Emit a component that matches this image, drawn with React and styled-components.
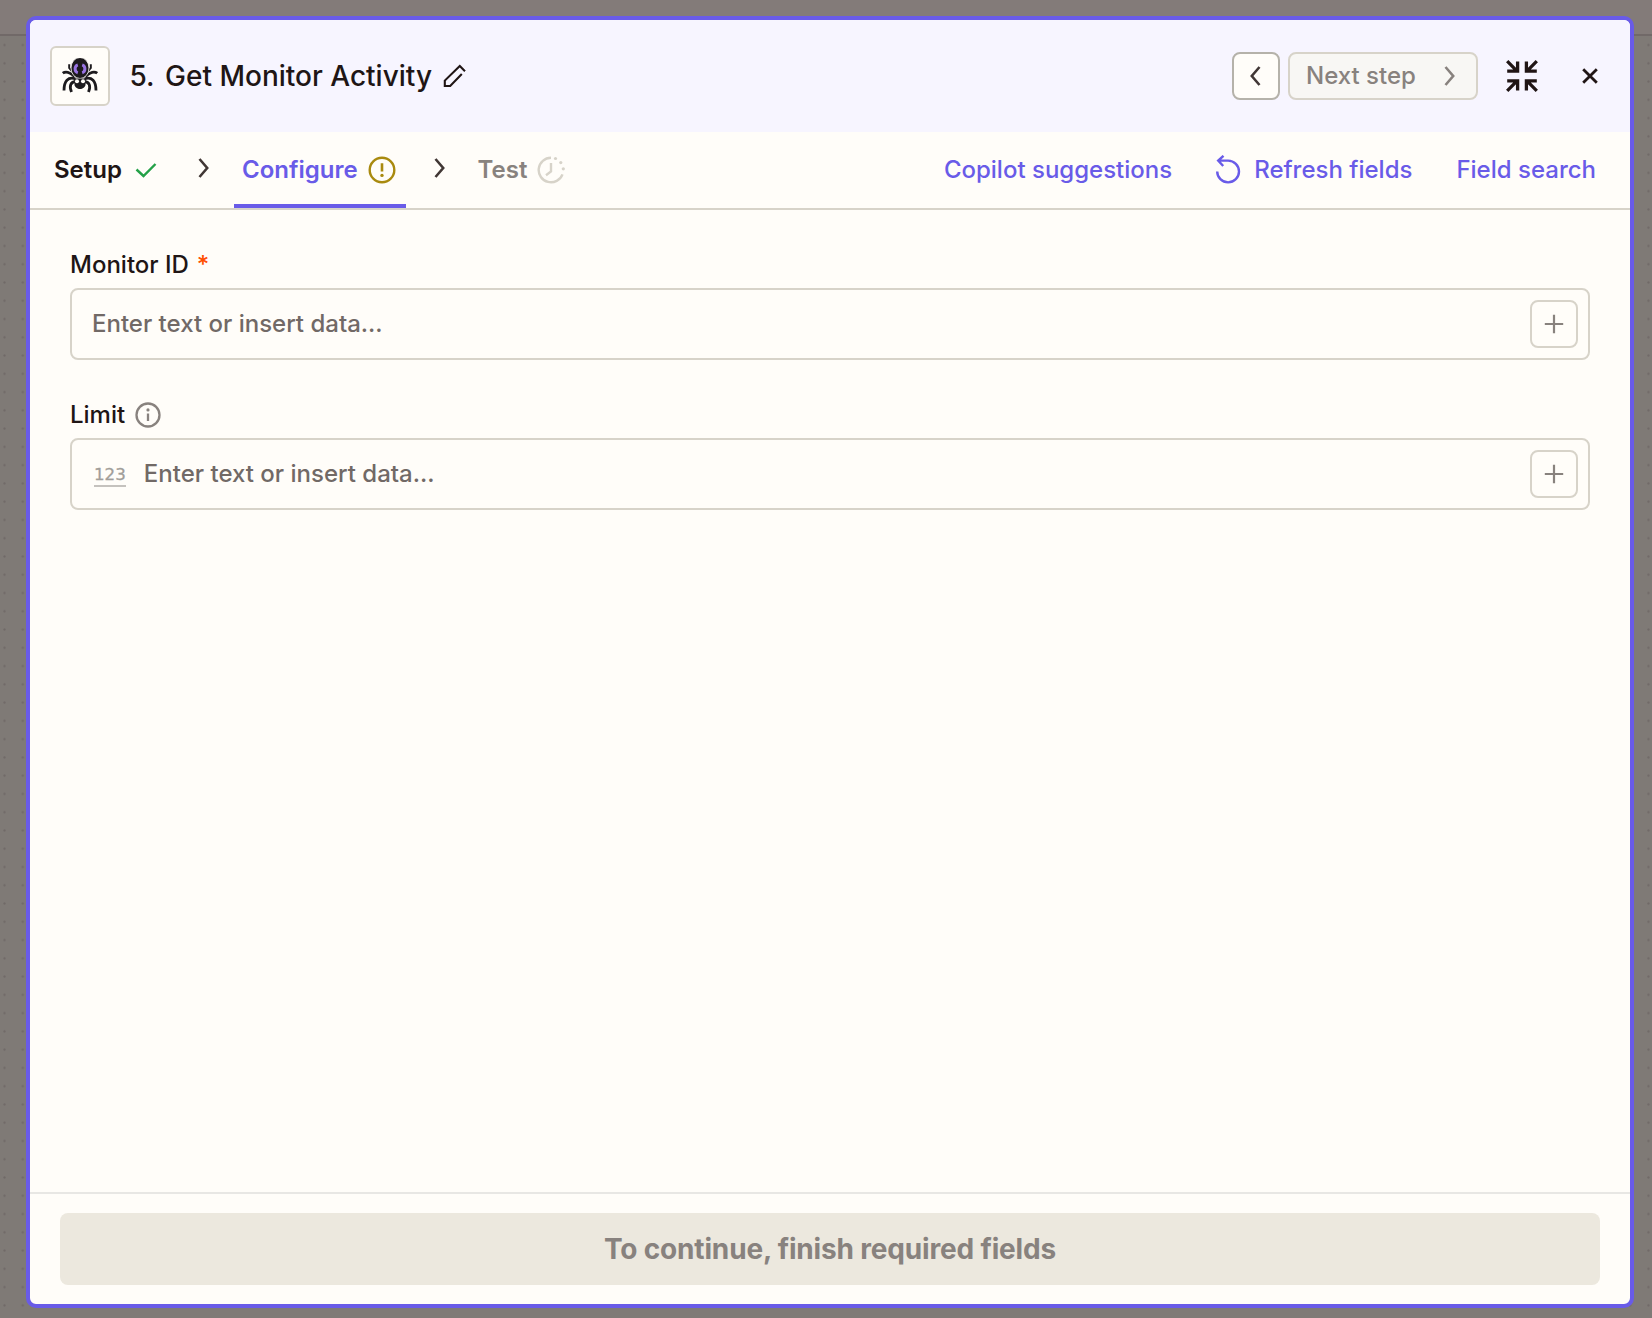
import { useState } from 'react'
import styled, { createGlobalStyle, css } from 'styled-components'

const GlobalStyle = createGlobalStyle`
  * {
    box-sizing: border-box;
  }
  body {
    margin: 0;
    font-family: Inter, "Liberation Sans", sans-serif;
    color: #201515;
  }
  button {
    font-family: inherit;
    cursor: pointer;
  }
  svg {
    display: block;
    flex-shrink: 0;
  }
`;

const Page = styled.div`
  height: 100vh;
  min-height: 1318px;
  padding: 16px 18px 10px 26px;
  overflow: hidden;
  background:
    linear-gradient(#837b79 0 34px, #716968 34px 36px, transparent 36px),
    radial-gradient(circle at 50% 50%, #706967 0 0.7px, transparent 1.5px) -4.6px 35.9px / 18.28px 18.28px,
    #7f7a76;
`;

const Panel = styled.section`
  display: flex;
  flex-direction: column;
  height: 1292px;
  border: 4px solid #695be8;
  border-radius: 10px;
  background: #fffdf9;
  overflow: hidden;
`;

const Header = styled.header`
  display: flex;
  align-items: center;
  height: 112px;
  padding: 0 32px 0 20px;
  background: #f7f5ff;
`;

const AppIcon = styled.div`
  display: flex;
  align-items: center;
  justify-content: center;
  width: 60px;
  height: 60px;
  border: 2px solid #d7d3c9;
  border-radius: 6px;
  background: #fffdf9;
`;

const Title = styled.h1`
  display: flex;
  align-items: center;
  gap: 10.5px;
  margin: 0 auto 0 19.5px;
  font-size: 28px;
  font-weight: 500;
  line-height: 36px;
  white-space: nowrap;
`;

// lifts a caption slightly against the icon beside it
const Caption = styled.span`
  margin-top: -2px;
`;

const StepButton = styled.button`
  display: flex;
  align-items: center;
  justify-content: center;
  height: 48px;
  width: 48px;
  padding: 0;
  border: 2px solid #b5b2aa;
  border-radius: 8px;
  background: #fffdf9;
  color: #413735;
  ${(props) => props.$wide && css`
    justify-content: space-between;
    width: 190px;
    margin-left: 8px;
    padding: 0 20px 0 16px;
    border-color: #d7d3c9;
    background: #f8f7f4;
    color: #88827e;
    font-size: 24px;
    font-weight: 500;
  `}
`;

const BackButton = styled(StepButton)`
  padding-right: 3px;
`;

const PlainButton = styled.button`
  display: flex;
  padding: 0;
  margin-left: ${(props) => props.$gap}px;
  border: none;
  background: none;
  color: #201515;
`;

const Toolbar = styled.nav`
  display: flex;
  align-items: stretch;
  height: 78px;
  padding: 0 34px 0 16px;
  border-bottom: 2px solid #d7d3c9;
`;

const Tab = styled.button`
  display: flex;
  align-items: center;
  gap: ${(props) => props.$gap || 10}px;
  padding: 4px 10px 0 8px;
  border: none;
  border-bottom: 4px solid ${(props) => (props.$active ? '#695be8' : 'transparent')};
  background: none;
  color: ${(props) => (props.$active ? '#695be8' : props.$muted ? '#88827e' : '#201515')};
  font-size: 24px;
  font-weight: 600;
`;

const Separator = styled.span`
  display: flex;
  align-items: center;
  padding-bottom: 4px;
  color: #413735;
  margin: 0 ${(props) => props.$right}px 0 ${(props) => props.$left}px;
`;

const Links = styled.div`
  display: flex;
  align-items: center;
  gap: 44px;
  margin-left: auto;
`;

const LinkButton = styled.button`
  display: flex;
  align-items: center;
  gap: 13px;
  height: 32px;
  padding: 0;
  border: none;
  background: none;
  color: #695be8;
  font-size: 24px;
  font-weight: 500;
  white-space: nowrap;
`;

const Fields = styled.main`
  flex: 1;
  display: flex;
  flex-direction: column;
  gap: 36px;
  padding: 36px 40px;
`;

const Field = styled.div`
  display: flex;
  flex-direction: column;
  gap: 6px;
`;

const Label = styled.label`
  display: flex;
  align-items: center;
  gap: 10px;
  height: 36px;
  font-size: 24px;
  font-weight: 500;
  svg {
    margin-top: 1px;
  }
`;

const Required = styled.span`
  margin-left: -2px;
  color: #ff4f00;
`;

const InputBox = styled.div`
  display: flex;
  align-items: center;
  height: 72px;
  padding: 0 10px 0 20px;
  border: 2px solid #d7d3c9;
  border-radius: 8px;
  background: #fffdf9;
`;

const NumberHint = styled.span`
  margin: 1px 18px 0 2px;
  border-bottom: 2px solid #c5c2be;
  color: #a19d99;
  font-family: "DejaVu Sans", sans-serif;
  font-size: 16.7px;
  line-height: 22px;
  -webkit-text-stroke: 0.3px #a19d99;
`;

const TextInput = styled.input`
  flex: 1;
  min-width: 0;
  padding: 0 0 2px;
  border: none;
  outline: none;
  background: none;
  color: #201515;
  font-family: inherit;
  font-size: 24px;
  font-weight: 500;
  &::placeholder {
    color: #716966;
    opacity: 1;
  }
`;

const InsertButton = styled(StepButton)`
  border-color: #d7d3c9;
  color: #88827e;
`;

const Footer = styled.footer`
  padding: 19px 30px;
  border-top: 2px solid #e8e7e4;
`;

const ContinueButton = styled.button`
  width: 100%;
  height: 72px;
  padding: 0;
  border: none;
  border-radius: 8px;
  background: #ece8de;
  color: #88827e;
  font-size: 28px;
  font-weight: 700;
  letter-spacing: -0.17px;
`;

const Chevron = ({ left }) => (
  <svg width="12" height="20" viewBox="0 0 12 20" fill="none" stroke="currentColor" strokeWidth="2.6">
    <path d={left ? 'M10.5 1 2.8 10l7.7 9' : 'M1.5 1l7.7 9-7.7 9'} />
  </svg>
);

const Spider = () => (
  <svg width="36" height="36" viewBox="0 0 36 36" fill="none">
    <g stroke="#1d1b1e" strokeWidth="2.8">
      <path d="M7.2 6.2v3.600l3.300 4M28.800 6.200v3.600l-3.300 4" strokeWidth="2" />
      <path d="M.8 15.200C4 12.800 7.500 14 12.500 18.500M35.200 15.200c-3.200-2.400-6.700-1.200-11.700 3.300" />
      <path d="M13.500 20.800C6 18.500 2 23 2 32.500M22.500 20.800C30 18.500 34 23 34 32.500" />
      <path d="M13.500 23.500c-5 .5-6.500 4.500-4 10.500M22.500 23.500c5 .5 6.500 4.500 4 10.500" />
    </g>
    <ellipse cx="18" cy="10" rx="9" ry="10.500" fill="#1d1b1e" stroke="#fffdf9" strokeWidth=".8" />
    <path d="M12.500 20.500h11v6c0 2.500-3 4.500-5.500 4.500s-5.500-2-5.500-4.500z" fill="#1d1b1e" />
    <circle cx="15" cy="23.200" r="2" fill="#fffdf9" />
    <circle cx="21" cy="23.200" r="2" fill="#fffdf9" />
    <path d="M15.800 6.800c-3.600 1.200-3.600 6.800 0 8M20.200 6.800c3.600 1.200 3.600 6.800 0 8" stroke="#9873e2" strokeWidth="3" />
  </svg>
);

const Pencil = () => (
  <svg width="24" height="24" viewBox="0 0 24 24" fill="none" stroke="currentColor" strokeWidth="2.1">
    <path d="M22 7.200 16.800 2 1.800 16.600V22h5.400L18.800 10" />
  </svg>
);

const Collapse = () => (
  <svg width="32" height="32" viewBox="0 0 32 32" fill="none" stroke="currentColor" strokeWidth="3.300">
    <path d="M1.200 1.200 10.800 10.800M1.200 11.200h10.400V1.500M30.800 1.200 21.200 10.800M30.800 11.200H20.400V1.500M1.200 30.800 10.800 21.200M1.200 20.800h10.400V30.500M30.800 30.800 21.200 21.200M30.800 20.800H20.400V30.500" />
  </svg>
);

const Close = () => (
  <svg width="16" height="16" viewBox="0 0 16 16" stroke="currentColor" strokeWidth="2.8">
    <path d="M1.200 1.200l13.600 13.600M14.800 1.200 1.200 14.800" />
  </svg>
);

const Check = () => (
  <svg width="22" height="16" viewBox="0 0 22 16" fill="none" stroke="#24a148" strokeWidth="2.400">
    <path d="M1.500 7.500l7 6.500L20.500 2" />
  </svg>
);

const Warning = () => (
  <svg width="28" height="28" viewBox="0 0 28 28" fill="none" stroke="#a98a0f" strokeWidth="2.400">
    <circle cx="14" cy="14" r="12.300" />
    <path d="M14 7.200v8.300" strokeWidth="2.600" />
    <circle cx="14" cy="19.400" r="1.700" fill="#a98a0f" stroke="none" />
  </svg>
);

const Pending = () => (
  <svg width="28" height="28" viewBox="0 0 28 28" fill="none" stroke="#d7d3c9" strokeWidth="2.400">
    <path d="M14 1.700a12.300 12.300 0 1 0 11.500 16.600" />
    <path d="M14 7v8.500l-5 3.700" />
    <g fill="#d7d3c9" stroke="none">
      <circle cx="18.500" cy="2.500" r="1.600" />
      <circle cx="23.800" cy="6.600" r="1.600" />
      <circle cx="26.300" cy="12.800" r="1.600" />
    </g>
  </svg>
);

const Refresh = () => (
  <svg width="25" height="30" viewBox="1 0 25 30" fill="none" stroke="currentColor" strokeWidth="2.400">
    <path d="M2.200 16.500a10.900 10.900 0 1 0 10.900-10.900H3.500M8.500.8 3.200 5.600l5 5.400" />
  </svg>
);

const Info = () => (
  <svg width="26" height="26" viewBox="0 0 26 26" fill="none" stroke="#88827e" strokeWidth="2.300">
    <circle cx="13" cy="13" r="11.500" />
    <path d="M13 11.500V19" />
    <circle cx="13" cy="7.900" r="1.600" fill="#88827e" stroke="none" />
  </svg>
);

const Plus = () => (
  <svg width="20" height="20" viewBox="0 0 20 20" stroke="currentColor" strokeWidth="2.200">
    <path d="M10 .8v18.400M.8 10h18.400" />
  </svg>
);

const DataInput = ({ id, numeric }) => {
  const [value, setValue] = useState('')

  return (
    <InputBox>
      {numeric && <NumberHint>123</NumberHint>}
      <TextInput
        id={id}
        value={value}
        placeholder="Enter text or insert data..."
        onChange={(e) => setValue(e.target.value)}
      />
      <InsertButton><Plus /></InsertButton>
    </InputBox>
  );
};

const App = () => {
  const [tab, setTab] = useState('configure')

  return (
    <>
      <GlobalStyle />
      <Page>
        <Panel>
          <Header>
            <AppIcon><Spider /></AppIcon>
            <Title>
              <span>5.</span>
              <span>Get Monitor Activity</span>
              <Pencil />
            </Title>
            <BackButton><Chevron left /></BackButton>
            <StepButton $wide disabled>
              <Caption>Next step</Caption>
              <Chevron />
            </StepButton>
            <PlainButton $gap={28}><Collapse /></PlainButton>
            <PlainButton $gap={44}><Close /></PlainButton>
          </Header>

          <Toolbar>
            <Tab $gap={13} $active={tab === 'setup'} onClick={() => setTab('setup')}>
              <Caption>Setup</Caption> <Check />
            </Tab>
            <Separator $left={31} $right={24}><Chevron /></Separator>
            <Tab $active={tab === 'configure'} onClick={() => setTab('configure')}>
              <Caption>Configure</Caption> <Warning />
            </Tab>
            <Separator $left={28} $right={24}><Chevron /></Separator>
            <Tab $muted>
              <Caption>Test</Caption> <Pending />
            </Tab>
            <Links>
              <LinkButton><Caption>Copilot suggestions</Caption></LinkButton>
              <LinkButton><Refresh /> <Caption>Refresh fields</Caption></LinkButton>
              <LinkButton><Caption>Field search</Caption></LinkButton>
            </Links>
          </Toolbar>

          <Fields>
            <Field>
              <Label htmlFor="monitor">
                Monitor ID <Required>*</Required>
              </Label>
              <DataInput id="monitor" />
            </Field>
            <Field>
              <Label htmlFor="limit">
                Limit <Info />
              </Label>
              <DataInput id="limit" numeric />
            </Field>
          </Fields>

          <Footer>
            <ContinueButton disabled>To continue, finish required fields</ContinueButton>
          </Footer>
        </Panel>
      </Page>
    </>
  );
};

export default App;
